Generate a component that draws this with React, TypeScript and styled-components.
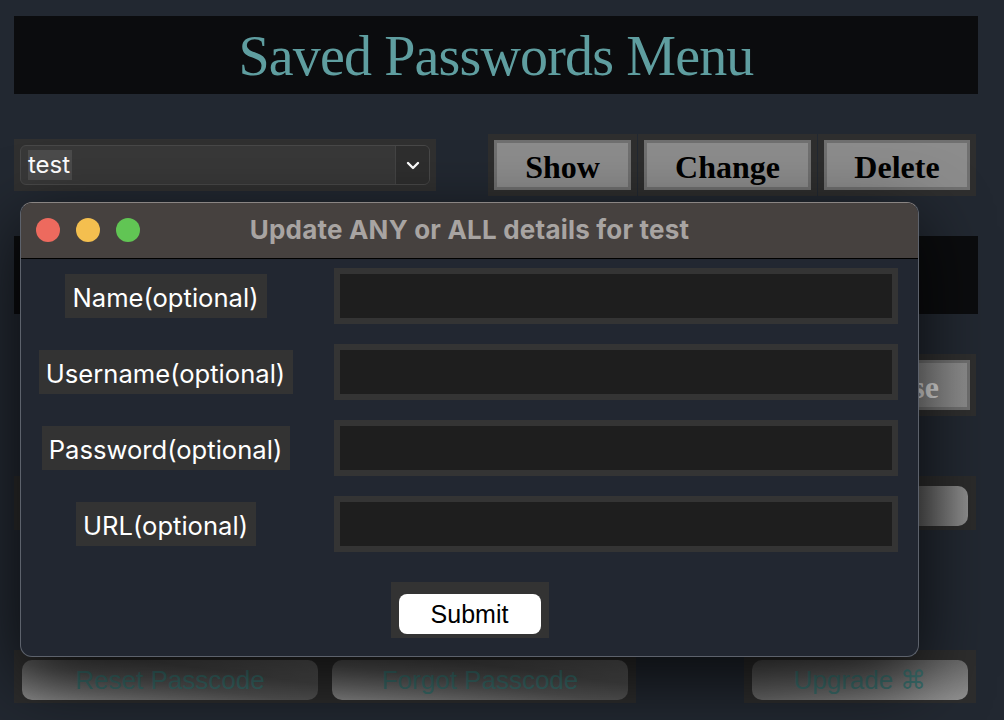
import React from "react";
import styled, { createGlobalStyle } from "styled-components";

const Global = createGlobalStyle`
  html, body { margin: 0; padding: 0; background: #222831; }
  body { width: 1004px; height: 720px; overflow: hidden; }
  * { box-sizing: border-box; }
`;

const Page = styled.div`
  position: relative;
  width: 1004px;
  height: 720px;
  padding: 16px 26px 0 14px;
  display: flex;
  flex-direction: column;
  background: #222831;
`;

const BlackBar = styled.div<{ $mt?: number }>`
  height: 78px;
  margin-top: ${(p) => p.$mt ?? 0}px;
  background: #0b0c0e;
  display: flex;
  align-items: center;
  justify-content: center;
`;

const Title = styled.h1`
  margin: 0;
  font-family: "Liberation Serif", "Times New Roman", serif;
  font-weight: 400;
  font-size: 56px;
  letter-spacing: -0.85px;
  color: #5f9ea0;
  line-height: 1;
  padding-top: 2px;
`;

const Row = styled.div<{ $mt: number; $justify?: string }>`
  margin-top: ${(p) => p.$mt}px;
  display: flex;
  align-items: center;
  justify-content: ${(p) => p.$justify ?? "space-between"};
  padding-right: 2px;
`;

const Frame = styled.div<{ $pad?: string }>`
  background: #2e2e2e;
  padding: ${(p) => p.$pad ?? "6px"};
  display: flex;
  gap: 14px;
`;

const SelectFrame = styled.div`
  width: 422px;
  height: 52px;
  background: #303030;
  padding: 6px 6px;
`;

const Select = styled.div`
  height: 40px;
  border: 1px solid #484848;
  border-radius: 6px;
  background: #383838;
  display: flex;
  align-items: center;
  overflow: hidden;
`;

const SelectText = styled.div`
  flex: 1;
  padding-left: 7px;
  display: flex;
  align-items: center;
`;

const Highlight = styled.span`
  background: #4b4b4b;
  color: #ffffff;
  font-family: "Inter", "Noto Sans", sans-serif;
  font-size: 24px;
  line-height: 30px;
  padding: 0 2px 0 0;
`;

const Arrow = styled.div`
  width: 34px;
  height: 100%;
  background: #2e2e2e;
  border-left: 1px solid #444;
  display: flex;
  align-items: center;
  justify-content: center;
`;

const ButtonGroup = styled.div`
  display: flex;
  gap: 1px;
`;

const SerifButton = styled.button<{ $w: number; $light?: boolean }>`
  width: ${(p) => p.$w}px;
  height: 50px;
  background: ${(p) => (p.$light ? "linear-gradient(90deg,#7e7e7e,#8c8c8c)" : "#8c8c8c")};
  border: 3px solid #707070;
  font-family: "Liberation Serif", "Times New Roman", serif;
  font-weight: 700;
  font-size: 32px;
  color: ${(p) => (p.$light ? "#dedede" : "#000")};
  padding: 0;
  display: flex;
  align-items: center;
  justify-content: center;
  padding-top: 4px;
`;

const WideFrame = styled.div`
  margin-top: 60px;
  margin-right: 2px;
  height: 54px;
  background: #2b2b2b;
  display: flex;
  justify-content: flex-end;
  align-items: center;
  padding: 6px 8px 0 8px;
`;

const GradientButton = styled.button<{ $w: number; $dir: string }>`
  width: ${(p) => p.$w}px;
  height: 40px;
  border: none;
  border-radius: 10px;
  background: ${(p) => p.$dir};
  font-family: "Liberation Sans", Arial, sans-serif;
  font-size: 26px;
  color: #3d7270;
  display: flex;
  align-items: center;
  justify-content: center;
  padding: 0;
`;

const BottomRow = styled.div`
  margin-top: 120px;
  margin-right: 2px;
  display: flex;
  justify-content: space-between;
`;

const BottomFrame = styled.div`
  background: #2d2d2d;
  padding: 10px 8px 3px 8px;
  display: flex;
  gap: 14px;
`;

/* ---------- Modal ---------- */

const Modal = styled.div`
  position: absolute;
  left: 20px;
  top: 202px;
  width: 899px;
  height: 455px;
  border-radius: 12px;
  border: 1px solid #5d626c;
  border-top-color: #8a8583;
  background: #222731;
  overflow: hidden;
  box-shadow: 0 22px 70px rgba(0, 0, 0, 0.75);
  display: flex;
  flex-direction: column;
`;

const TitleBar = styled.div`
  position: relative;
  height: 56px;
  background: #46413f;
  border-bottom: 1px solid #000;
  display: flex;
  align-items: center;
  justify-content: center;
  flex-shrink: 0;
`;

const Lights = styled.div`
  position: absolute;
  left: 15px;
  top: 15px;
  display: flex;
  gap: 16px;
`;

const Light = styled.span<{ $c: string }>`
  width: 24px;
  height: 24px;
  border-radius: 50%;
  background: ${(p) => p.$c};
`;

const ModalTitle = styled.div`
  font-family: "Inter", "Noto Sans", sans-serif;
  font-weight: 700;
  font-size: 26px;
  letter-spacing: 0.2px;
  color: #a8a4a2;
  padding-bottom: 3px;
`;

const Body = styled.div`
  padding-top: 9px;
  display: flex;
  flex-direction: column;
  align-items: center;
`;

const FormGrid = styled.div`
  align-self: flex-start;
  display: grid;
  grid-template-columns: 290px 564px;
  column-gap: 23px;
  row-gap: 20px;
  align-items: center;
`;

const Label = styled.div`
  justify-self: center;
  height: 44px;
  background: #333333;
  padding: 3px 8px 0 7px;
  display: flex;
  align-items: center;
  font-family: "Inter", "Noto Sans", sans-serif;
  font-size: 25.6px;
  color: #ffffff;
`;

const InputFrame = styled.div`
  height: 56px;
  background: #343434;
  padding: 6px;
`;

const Input = styled.input`
  width: 100%;
  height: 100%;
  border: none;
  outline: none;
  background: #1e1e1e;
  display: block;
`;

const SubmitFrame = styled.div`
  margin-top: 30px;
  background: #333333;
  padding: 12px 8px 4px 8px;
`;

const SubmitButton = styled.button`
  width: 142px;
  height: 40px;
  border: none;
  border-radius: 8px;
  background: #ffffff;
  font-family: "Liberation Sans", Arial, sans-serif;
  font-size: 25px;
  color: #000;
  padding: 0;
`;

const lightGrad = "linear-gradient(to top right, #8a8a8a 0%, #5a5a5a 45%, #4f4f4f 70%, #626262 100%)";
const upGrad = "linear-gradient(to bottom right, #4c4c4c 0%, #6a6a6a 50%, #919191 100%)";

const fields = ["Name(optional)", "Username(optional)", "Password(optional)", "URL(optional)"];

export default function App() {
  return (
    <>
      <Global />
      <Page>
        <BlackBar>
          <Title>Saved Passwords Menu</Title>
        </BlackBar>

        <Row $mt={40}>
          <SelectFrame>
            <Select>
              <SelectText>
                <Highlight>test</Highlight>
              </SelectText>
              <Arrow>
                <svg width="14" height="9" viewBox="0 0 14 9">
                  <path d="M2 2 L7 7 L12 2" fill="none" stroke="#fff" strokeWidth="2.4" strokeLinecap="round" strokeLinejoin="round" />
                </svg>
              </Arrow>
            </Select>
          </SelectFrame>
          <ButtonGroup>
            <Frame>
              <SerifButton $w={137}>Show</SerifButton>
            </Frame>
            <Frame>
              <SerifButton $w={167}>Change</SerifButton>
            </Frame>
            <Frame>
              <SerifButton $w={146}>Delete</SerifButton>
            </Frame>
          </ButtonGroup>
        </Row>

        <BlackBar $mt={40} />

        <Row $mt={40} $justify="flex-end">
          <Frame>
            <SerifButton $w={137} $light>Close</SerifButton>
          </Frame>
        </Row>

        <WideFrame>
          <GradientButton $w={120} $dir="linear-gradient(90deg, #3c3c3c 0%, #5c5c5c 60%, #8e8e8e 100%)" />
        </WideFrame>

        <BottomRow>
          <BottomFrame>
            <GradientButton $w={296} $dir={lightGrad}>Reset Passcode</GradientButton>
            <GradientButton $w={296} $dir={lightGrad}>Forgot Passcode</GradientButton>
          </BottomFrame>
          <BottomFrame>
            <GradientButton $w={216} $dir={upGrad}>Upgrade ⌘</GradientButton>
          </BottomFrame>
        </BottomRow>

        <Modal>
          <TitleBar>
            <Lights>
              <Light $c="#ed6a5e" />
              <Light $c="#f4bf4f" />
              <Light $c="#61c554" />
            </Lights>
            <ModalTitle>Update ANY or ALL details for test</ModalTitle>
          </TitleBar>
          <Body>
            <FormGrid>
              {fields.map((f) => (
                <React.Fragment key={f}>
                  <Label>{f}</Label>
                  <InputFrame>
                    <Input />
                  </InputFrame>
                </React.Fragment>
              ))}
            </FormGrid>
            <SubmitFrame>
              <SubmitButton>Submit</SubmitButton>
            </SubmitFrame>
          </Body>
        </Modal>
      </Page>
    </>
  );
}
